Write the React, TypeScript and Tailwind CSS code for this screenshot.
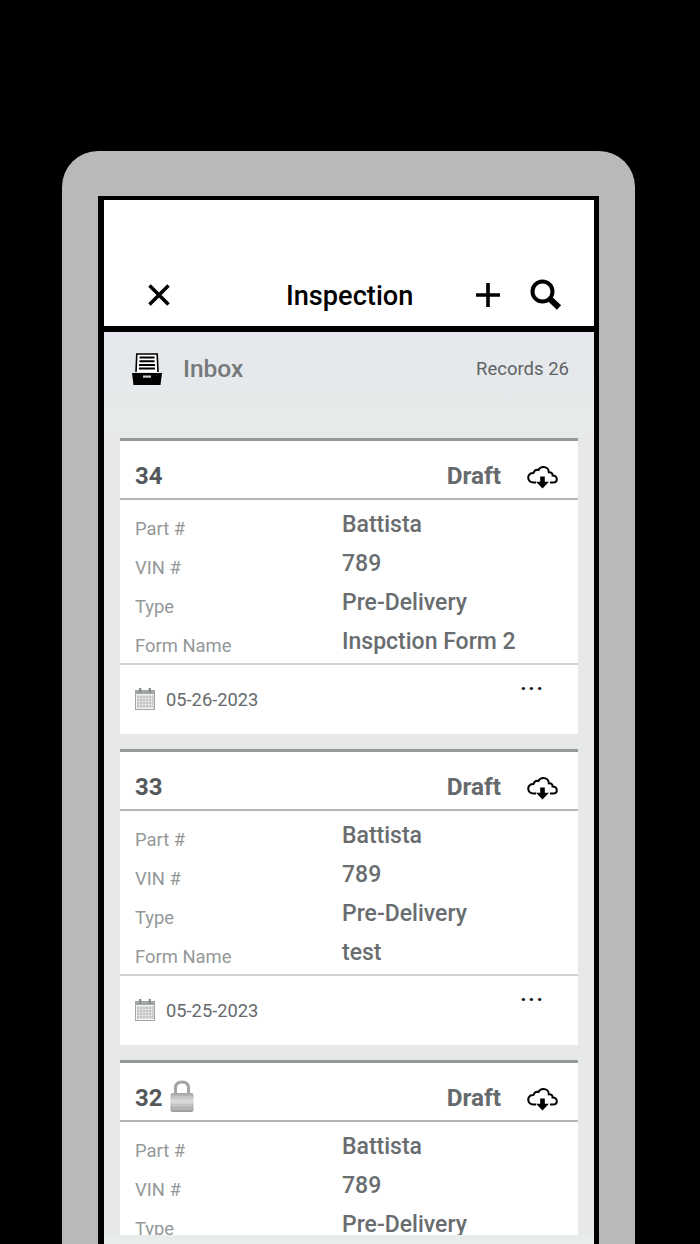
const font = { fontFamily: "Roboto, sans-serif" };

function CloseIcon() {
  return (
    <svg width="24" height="24" viewBox="0 0 24 24" className="block">
      <path d="M2.5 2.5 L21.5 21.5 M21.5 2.5 L2.5 21.5" stroke="#000" strokeWidth="3.6" fill="none" />
    </svg>
  );
}

function PlusIcon() {
  return (
    <svg width="26" height="26" viewBox="0 0 26 26" className="block">
      <path d="M13 1 V25 M1 13 H25" stroke="#000" strokeWidth="3.6" fill="none" />
    </svg>
  );
}

function SearchIcon() {
  return (
    <svg width="32" height="32" viewBox="0 0 32 32" className="block">
      <circle cx="12.5" cy="12.5" r="10" stroke="#000" strokeWidth="4" fill="none" />
      <path d="M19.5 19.5 L29 28.5" stroke="#000" strokeWidth="6" fill="none" />
    </svg>
  );
}

function DrawerIcon() {
  return (
    <svg width="30" height="32" viewBox="0 0 30 32" className="block">
      <path d="M4 19 L4.8 1 H25.2 L26 19" stroke="#000" strokeWidth="1.6" fill="#fff" />
      <path d="M7.5 4.5 H22.5 M7.5 8.2 H22.5 M7 11.9 H23 M7 15.6 H23" stroke="#000" strokeWidth="2" fill="none" />
      <path d="M0 20 H30 L28.5 32 H1.5 Z" fill="#000" />
      <rect x="11" y="22.5" width="8" height="2.2" fill="#ccc" />
    </svg>
  );
}

function CloudIcon() {
  return (
    <svg width="31" height="23" viewBox="0 0 31 23" className="block">
      <path
        d="M9 16.5 H6.5 C3.2 16.5 1.2 14.4 1.2 11.6 C1.2 8.8 3.4 6.8 6.4 7 C7.4 4.4 9.4 3.4 11.4 4 C12.4 2 14.2 1 16.4 1 C19.6 1 21.8 3.2 21.8 6.2 C24.2 5.8 25.8 7.4 25.6 9.4 C28.2 9.4 29.8 11.2 29.8 13.2 C29.8 15.2 28.2 16.5 25.8 16.5 H23"
        stroke="#000"
        strokeWidth="2"
        fill="none"
      />
      <path d="M13.2 10.5 H17.8 V15.8 H22 L15.5 22.5 L9 15.8 H13.2 Z" fill="#000" />
    </svg>
  );
}

function CalendarIcon() {
  return (
    <svg width="20" height="22" viewBox="0 0 20 22" className="block">
      <rect x="0" y="2" width="20" height="20" fill="#a3a6a6" />
      <rect x="4" y="0" width="2.4" height="5" fill="#8b8e8e" />
      <rect x="13.6" y="0" width="2.4" height="5" fill="#8b8e8e" />
      <rect x="1" y="6" width="18" height="15" fill="#f3f3f3" />
      <path
        d="M3 7 V20 M6 7 V20 M9 7 V20 M12 7 V20 M15 7 V20 M18 7 V20 M2 9 H18 M2 12 H18 M2 15 H18 M2 18 H18"
        stroke="#b6b8b8"
        strokeWidth="1"
        fill="none"
      />
    </svg>
  );
}

function LockIcon() {
  return (
    <svg width="24" height="32" viewBox="0 0 24 32" className="block">
      <defs>
        <linearGradient id="lockBody" x1="0" y1="0" x2="0" y2="1">
          <stop offset="0" stopColor="#a4a6a6" />
          <stop offset="0.45" stopColor="#d8d9d9" />
          <stop offset="0.7" stopColor="#b4b6b6" />
          <stop offset="1" stopColor="#9a9c9c" />
        </linearGradient>
      </defs>
      <path d="M5.5 14 V8 C5.5 4 8 2 12 2 C16 2 18.5 4 18.5 8 V14" stroke="#a2a4a4" strokeWidth="3" fill="none" />
      <rect x="0.5" y="13" width="23" height="19" rx="2" fill="url(#lockBody)" />
      <path d="M2 17 H22 M2 20 H22 M2 23 H22 M2 26 H22 M2 29 H22" stroke="#fff" strokeOpacity="0.3" strokeWidth="1" />
    </svg>
  );
}

type Inspection = {
  id: string;
  locked?: boolean;
  partNo: string;
  vin: string;
  type: string;
  formName: string;
  date: string;
};

const records: Inspection[] = [
  { id: "34", partNo: "Battista", vin: "789", type: "Pre-Delivery", formName: "Inspction Form 2", date: "05-26-2023" },
  { id: "33", partNo: "Battista", vin: "789", type: "Pre-Delivery", formName: "test", date: "05-25-2023" },
  { id: "32", locked: true, partNo: "Battista", vin: "789", type: "Pre-Delivery", formName: "test", date: "05-24-2023" },
];

function Row({ label, value }: { label: string; value: string }) {
  return (
    <div className="flex h-[39px] items-center">
      <span className="w-[207px] shrink-0 pt-[8px] text-[18.4px] text-[#949899]">{label}</span>
      <span className="pt-[1px] text-[23px] font-medium text-[#696d6f]">{value}</span>
    </div>
  );
}

function RecordCard({ record }: { record: Inspection }) {
  return (
    <div className="shrink-0 border-t-[3px] border-[#949a9a] bg-white">
      <div className="flex h-[59px] items-center border-b-2 border-[#b4b6b6] pl-[15px] pr-[20px] pt-[12px]">
        <span className="text-[24px] font-bold text-[#55595b]">{record.id}</span>
        {record.locked && (
          <span className="ml-[7px] -mt-[4px]">
            <LockIcon />
          </span>
        )}
        <span className="ml-auto mt-[1px] text-[24.3px] font-bold text-[#666a6c]">Draft</span>
        <span className="ml-[26px] mt-[4px]">
          <CloudIcon />
        </span>
      </div>
      <div className="h-[165px] border-b-2 border-[#d0d2d2] pl-[15px] pt-[5px]">
        <Row label="Part #" value={record.partNo} />
        <Row label="VIN #" value={record.vin} />
        <Row label="Type" value={record.type} />
        <Row label="Form Name" value={record.formName} />
      </div>
      <div className="relative flex h-[69px] items-center gap-[11px] pl-[15px]">
        <span className="-mt-[2px]">
          <CalendarIcon />
        </span>
        <span className="text-[18.3px] text-[#666a6c]">{record.date}</span>
        <span className="absolute right-[33px] top-[8px] text-[20px] font-bold leading-[20px] tracking-[2.4px] text-black">
          ...
        </span>
      </div>
    </div>
  );
}

export default function App() {
  return (
    <div className="flex h-[1244px] w-[700px] flex-col overflow-hidden bg-black pl-[62px] pr-[65px] pt-[151px]" style={font}>
      <div className="flex min-h-0 flex-1 flex-col rounded-t-[36px] bg-[#b9b9b9] px-[36px] pt-[45px]">
        <div className="flex min-h-0 flex-1 flex-col border-l-[6px] border-r-[5px] border-t-[4px] border-black bg-white">
          <header className="flex h-[132px] shrink-0 items-end border-b-[6px] border-black pb-[14px] pl-[43px] pr-[32px]">
            <span className="mb-[5px]">
              <CloseIcon />
            </span>
            <h1 className="-mb-[2px] ml-[115px] text-[27.2px] font-medium leading-[36px] text-black">
              Inspection
            </h1>
            <span className="mb-[4px] ml-auto">
              <PlusIcon />
            </span>
            <span className="mb-[1px] ml-[29px]">
              <SearchIcon />
            </span>
          </header>
          <div className="flex min-h-0 flex-1 flex-col bg-[#e8ecea] pb-[9px]">
            <div className="flex min-h-0 flex-1 flex-col overflow-hidden bg-[#e6e8ea]">
              <div className="flex h-[106px] shrink-0 items-start bg-gradient-to-b from-[#e5e8ec] to-[#e8eaea] pl-[28px] pr-[25px] pt-[21px]">
                <DrawerIcon />
                <span className="ml-[21px] mt-[-1px] text-[24.5px] font-medium leading-[34px] text-[#75797c]">Inbox</span>
                <span className="ml-auto mt-[3px] text-[18.5px] leading-[26px] text-[#5f6366]">Records 26</span>
              </div>
              <div className="flex flex-col gap-[15px] px-[16px]">
                {records.map((record) => (
                  <RecordCard key={record.id} record={record} />
                ))}
              </div>
            </div>
          </div>
        </div>
      </div>
    </div>
  );
}
